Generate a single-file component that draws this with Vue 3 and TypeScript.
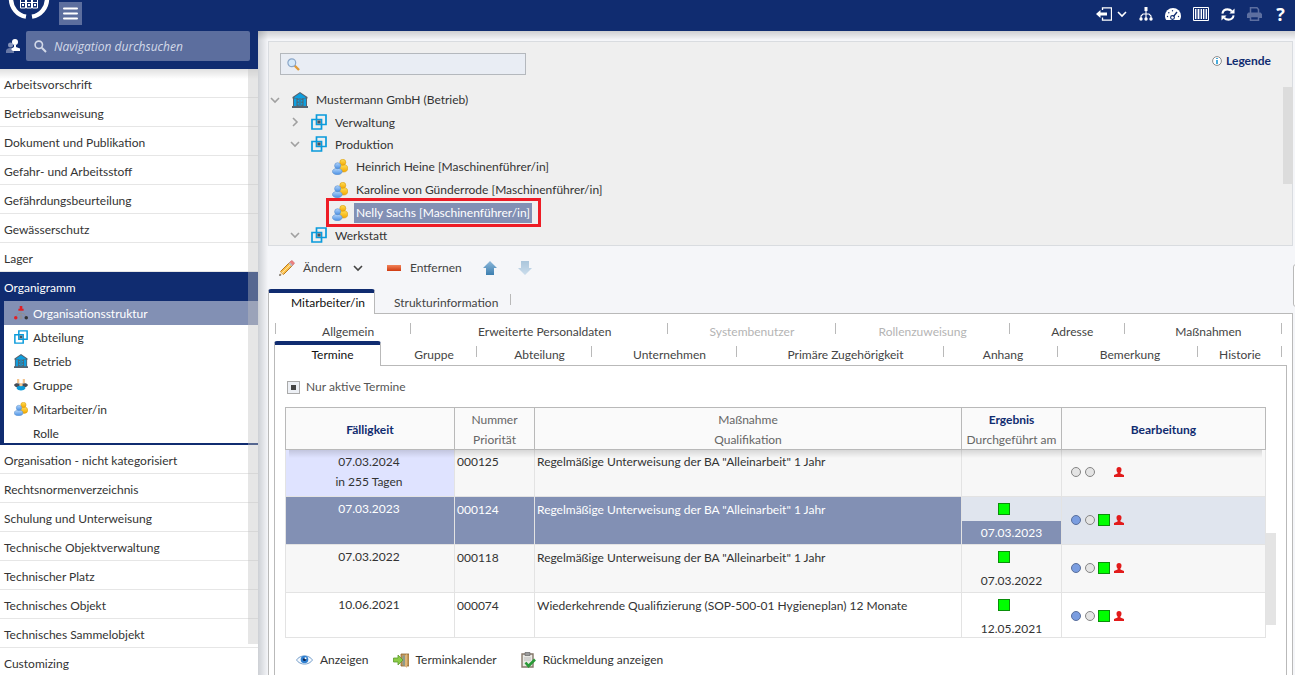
<script setup lang="ts">
import { ref } from 'vue'

interface NavChild { label: string; icon?: string }
interface TreeNode { label: string; icon: string; level: number; state?: 'open' | 'closed' }
interface Tab { label: string; disabled?: boolean; cls?: string }
interface Row {
  due: string
  note?: string
  no: string
  title: string
  done?: string
}

const navTop: string[] = [
  'Arbeitsvorschrift', 'Betriebsanweisung', 'Dokument und Publikation', 'Gefahr- und Arbeitsstoff',
  'Gefährdungsbeurteilung', 'Gewässerschutz', 'Lager',
]
const navBottom: string[] = [
  'Organisation - nicht kategorisiert', 'Rechtsnormenverzeichnis', 'Schulung und Unterweisung',
  'Technische Objektverwaltung', 'Technischer Platz', 'Technisches Objekt',
  'Technisches Sammelobjekt', 'Customizing',
]
const navChildren: NavChild[] = [
  { label: 'Organisationsstruktur', icon: 'i-org' },
  { label: 'Abteilung', icon: 'i-dept' },
  { label: 'Betrieb', icon: 'i-house' },
  { label: 'Gruppe', icon: 'i-group' },
  { label: 'Mitarbeiter/in', icon: 'i-people' },
  { label: 'Rolle' },
]
const activeChild = ref(0)

const tree: TreeNode[] = [
  { label: 'Mustermann GmbH (Betrieb)', icon: 'i-house', level: 0, state: 'open' },
  { label: 'Verwaltung', icon: 'i-dept', level: 1, state: 'closed' },
  { label: 'Produktion', icon: 'i-dept', level: 1, state: 'open' },
  { label: 'Heinrich Heine [Maschinenführer/in]', icon: 'i-people', level: 2 },
  { label: 'Karoline von Günderrode [Maschinenführer/in]', icon: 'i-people', level: 2 },
  { label: 'Nelly Sachs [Maschinenführer/in]', icon: 'i-people', level: 2 },
  { label: 'Werkstatt', icon: 'i-dept', level: 1, state: 'open' },
]
const activeNode = ref(5)

const upperTabs: Tab[] = [
  { label: 'Allgemein', cls: 'shift' },
  { label: 'Erweiterte Personaldaten', cls: 'shift' },
  { label: 'Systembenutzer', disabled: true },
  { label: 'Rollenzuweisung', disabled: true },
  { label: 'Adresse', cls: 'shift' },
  { label: 'Maßnahmen', cls: 'shift' },
]
const lowerTabs: Tab[] = [
  { label: 'Termine', cls: 'shift current' },
  { label: 'Gruppe', cls: 'shift' },
  { label: 'Abteilung', cls: 'shift' },
  { label: 'Unternehmen', cls: 'shift' },
  { label: 'Primäre Zugehörigkeit', cls: 'shift' },
  { label: 'Anhang', cls: 'nudge' },
  { label: 'Bemerkung', cls: 'nudge' },
  { label: 'Historie' },
]

const training = 'Regelmäßige Unterweisung der BA "Alleinarbeit" 1 Jahr'
const rows: Row[] = [
  { due: '07.03.2024', note: 'in 255 Tagen', no: '000125', title: training },
  { due: '07.03.2023', no: '000124', title: training, done: '07.03.2023' },
  { due: '07.03.2022', no: '000118', title: training, done: '07.03.2022' },
  { due: '10.06.2021', no: '000074', title: 'Wiederkehrende Qualifizierung (SOP-500-01 Hygieneplan) 12 Monate', done: '12.05.2021' },
]
const activeRow = ref(1)
const navQuery = ref('')
const treeQuery = ref('')
</script>

<template>
  <div class="app">
    <svg class="sprite" aria-hidden="true">
      <defs>
        <linearGradient id="g-blue" x1="0" y1="0" x2="0" y2="1"><stop offset="0" stop-color="#b4d6fb" /><stop offset="1" stop-color="#4a90e4" /></linearGradient>
        <linearGradient id="g-gold" x1="0" y1="0" x2="0" y2="1"><stop offset="0" stop-color="#ffdf55" /><stop offset="1" stop-color="#f5a800" /></linearGradient>
        <linearGradient id="g-arrow" x1="0" y1="0" x2="0" y2="1"><stop offset="0" stop-color="#8db8da" /><stop offset="1" stop-color="#3d7fb0" /></linearGradient>
        <linearGradient id="g-minus" x1="0" y1="0" x2="0" y2="1"><stop offset="0" stop-color="#f2845a" /><stop offset="1" stop-color="#cf3a10" /></linearGradient>
        <symbol id="i-house" viewBox="0 0 16 16">
          <path d="M8 0l7.500 5v1.500H15V14h1v2H0v-2h1V6.500H.5V5z" fill="#56636f" />
          <path d="M8 1.300L13.500 5v1h-11V5zM2 6.500h2.500V14H2zM5.500 5h2v9h-2zM8.500 5h2v9h-2zM11.500 6.500H14V14h-2.500z" fill="#0d9fe0" />
          <path d="M5.500 6.500h1V8h-1zM9.500 6.500h1V8h-1zM5.500 9.500h1V11h-1zM9.500 9.500h1V11h-1zM5.500 12.500h1V14h-1zM9.500 12.500h1V14h-1z" fill="#5f5750" />
        </symbol>
        <symbol id="i-dept" viewBox="0 0 16 16">
          <path d="M1 5.500h9.500V15H1z" fill="none" stroke="#0a9bdc" stroke-width="1.700" />
          <path d="M5.500 1H15v9.500H5.500z" fill="none" stroke="#0a9bdc" stroke-width="1.700" />
          <path d="M6.400 6.400h3.200v3.200H6.400z" fill="#4a5560" />
        </symbol>
        <symbol id="i-people" viewBox="0 0 16 16">
          <ellipse cx="11.500" cy="9.300" rx="4.200" ry="3.700" fill="url(#g-gold)" stroke="#d99a10" stroke-width=".6" />
          <circle cx="10.800" cy="3.300" r="3" fill="url(#g-gold)" stroke="#d99a10" stroke-width=".6" />
          <ellipse cx="5.300" cy="12.500" rx="4.900" ry="3.200" fill="url(#g-blue)" stroke="#5b8fcc" stroke-width=".6" />
          <circle cx="5.600" cy="6.700" r="3" fill="url(#g-blue)" stroke="#5b8fcc" stroke-width=".6" />
        </symbol>
        <symbol id="i-org" viewBox="0 0 16 16">
          <path d="M8 5v10M2.500 11.500L5 8.500h6l2.500 3" fill="none" stroke="#8d8d96" stroke-width="1.200" />
          <path d="M6.500 11h3v4h-3z" fill="#8d8d96" />
          <path d="M6.500 0h3v3H11v2.500H5V3h1.500z" fill="#e01f26" />
          <circle cx="2" cy="13.500" r="2" fill="#e01f26" /><circle cx="14" cy="13.500" r="2" fill="#333" />
        </symbol>
        <symbol id="i-group" viewBox="0 0 16 16">
          <path d="M3.500 1h2.500v5H3.500zM10 1h2.500v5H10z" fill="#f3c590" />
          <path d="M0 8c1-2.500 4-2.500 7-1.500L6 10.500C3 11 1 10 0 8zM16 8c-1-2.500-4-2.500-7-1.500l1 4c3 .5 5-.5 6-2.500z" fill="#474c55" />
          <circle cx="8" cy="7.500" r="1.800" fill="#f3c590" />
          <path d="M3 12c0-3 2.500-3.500 5-2.500 2.500-1 5-.5 5 2.500-1.500 3-8.500 3-10 0z" fill="#0c9ad8" />
        </symbol>
        <symbol id="i-down" viewBox="0 0 10 10"><path d="M1 3l4 4 4-4" fill="none" stroke="currentColor" stroke-width="1.600" /></symbol>
        <symbol id="i-right" viewBox="0 0 10 10"><path d="M3 1l4 4-4 4" fill="none" stroke="currentColor" stroke-width="1.600" /></symbol>
        <symbol id="i-up-arrow" viewBox="0 0 14 14"><path d="M7 0l7 7h-3v7H3V7H0z" fill="url(#g-arrow)" /></symbol>
        <symbol id="i-person" viewBox="0 0 10 10"><path d="M5 0a2.500 2.500 0 0 1 2.500 2.500C7.500 4 7 5 6.400 5.500v1L10 8v2H0V8l3.600-1.500v-1C3 5 2.500 4 2.500 2.500A2.500 2.500 0 0 1 5 0z" fill="#e21b1b" /></symbol>
      </defs>
    </svg>

    <header class="topbar">
      <svg class="logo" width="42" height="20" viewBox="0 0 42 20" aria-label="Logo" role="img">
        <path d="M3 -1a18 18 0 0 0 15 17.700M24 16.700A18 18 0 0 0 39 -1" fill="none" stroke="#fff" stroke-width="4.400" />
        <g fill="none" stroke="#fff" stroke-width="1">
          <path d="M12.500 -2v10h5v-10M18.500 -2v10h5v-10M24.500 -2v10h5v-10" /><path d="M12.500 2.500h5M18.500 2.500h5M24.500 2.500h5" />
        </g>
        <path d="M14 4h2v2h-2zM20 4h2v2h-2zM26 4h2v2h-2z" fill="#fff" />
      </svg>
      <button class="menu" type="button" aria-label="Menü">
        <svg width="15" height="13" viewBox="0 0 15 13"><path d="M1 1.500h13M1 6.500h13M1 11.500h13" stroke="#fff" stroke-width="2" stroke-linecap="round" /></svg>
      </button>
      <div class="tools">
        <button type="button" class="exit" aria-label="Abmelden">
          <svg width="16" height="16" viewBox="0 0 16 16"><path d="M6.500 4V1.800h9v12.400h-9V11.500" fill="none" stroke="#fff" stroke-width="1.300" /><path d="M0 8l4.500-4v2.500H11v3H4.500V12z" fill="#fff" /></svg>
          <svg width="10" height="10"><use href="#i-down" /></svg>
        </button>
        <button type="button" aria-label="Struktur">
          <svg width="14" height="14" viewBox="0 0 14 14"><path d="M7 2v9M2 11V9l2-2h6l2 2v2" fill="none" stroke="#fff" stroke-width="1.100" /><path d="M5.500 0h3v4h-3z" fill="#fff" /><circle cx="7" cy="12" r="1.700" fill="#fff" /><circle cx="2" cy="12" r="1.700" fill="#fff" /><circle cx="12" cy="12" r="1.700" fill="#fff" /></svg>
        </button>
        <button type="button" aria-label="Cockpit">
          <svg width="16" height="14" viewBox="0 0 16 14"><path d="M8 1a8 8 0 0 1 8 8c0 1.500-.5 3-1.300 4H1.300C.5 12 0 10.500 0 9a8 8 0 0 1 8-8z" fill="#fff" /><path d="M8.500 9.500L12 5" stroke="#102c70" stroke-width="1.300" /><circle cx="7.500" cy="10.500" r="1.900" fill="none" stroke="#102c70" stroke-width="1.100" /><g fill="#102c70"><circle cx="2.500" cy="9.500" r=".7" /><circle cx="3.800" cy="5.800" r=".7" /><circle cx="7.500" cy="3.800" r=".7" /><circle cx="13.500" cy="9.500" r=".7" /></g></svg>
        </button>
        <button type="button" aria-label="Barcode">
          <svg width="16" height="14" viewBox="0 0 16 14"><path d="M.5.500h15v13H.5z" fill="none" stroke="#fff" /><path d="M2.500 2v10M5.500 2v10M8.500 2v10M10.500 2v10M13.500 2v10" stroke="#fff" /><path d="M4 2v10M7 2v10M12 2v10" stroke="#c6cee2" /></svg>
        </button>
        <button type="button" aria-label="Aktualisieren">
          <svg width="14" height="15" viewBox="0 0 15 15"><path d="M1.500 6.500c.5-3 3-4.500 5.500-4.500 2 0 3.500.7 4.700 2M13.500 8.500c-.5 3-3 4.500-5.500 4.500-2 0-3.500-.7-4.700-2" fill="none" stroke="#fff" stroke-width="2.200" /><path d="M14.500 1v5.500H9zM.5 14V8.500H6z" fill="#fff" /></svg>
        </button>
        <button type="button" aria-label="Drucken" disabled>
          <svg width="15" height="14" viewBox="0 0 15 14"><path d="M3.500 6V.8h6.500L11.500 2.500V6" fill="none" stroke="#5d6fa0" stroke-width="1.500" /><path d="M1.500 5.500h12L15 7v4h-3V9H3v2H0V7z" fill="#5d6fa0" /><path d="M3.500 9.500h8v3.700h-8z" fill="none" stroke="#5d6fa0" stroke-width="1.500" /></svg>
        </button>
        <button type="button" class="help" aria-label="Hilfe">?</button>
      </div>
    </header>

    <div class="body">
      <aside class="sidebar">
        <div class="finder">
          <svg width="14" height="14" viewBox="0 0 14 14"><circle cx="4.500" cy="6" r="2.500" fill="#8693b8" /><path d="M0 14v-2c0-2 2-3 4.500-3S8 10 8 12v2z" fill="#6878a6" /><circle cx="9" cy="3" r="3" fill="#fff" /><path d="M5.500 11V9.500L8 8V6h2v2l4 1.500V12H7z" fill="#fff" /></svg>
          <label class="navsearch">
            <svg width="13" height="13" viewBox="0 0 13 13"><circle cx="4.800" cy="4.800" r="3.700" fill="none" stroke="#d3d9e8" stroke-width="1.600" /><path d="M7.800 7.800L12 12" stroke="#d3d9e8" stroke-width="2" /></svg>
            <input v-model="navQuery" type="text" placeholder="Navigation durchsuchen" aria-label="Navigation durchsuchen" />
          </label>
        </div>
        <nav class="nav">
          <a v-for="n in navTop" :key="n" href="#" class="item">{{ n }}</a>
          <div class="open">
            <a href="#" class="item head">Organigramm</a>
            <div class="children">
              <a v-for="(c, i) in navChildren" :key="c.label" href="#" class="child" :class="{ on: i === activeChild }" @click.prevent="activeChild = i">
                <svg width="14" height="14"><use v-if="c.icon" :href="'#' + c.icon" /></svg><span>{{ c.label }}</span>
              </a>
            </div>
          </div>
          <a v-for="n in navBottom" :key="n" href="#" class="item">{{ n }}</a>
          <div class="navscroll"></div>
        </nav>
      </aside>

      <main class="main">
        <section class="treepanel">
          <div class="treehead">
            <label class="treesearch">
              <svg width="13" height="13" viewBox="0 0 13 13"><path d="M7.500 7.500l4.500 4.500" stroke="#e09a35" stroke-width="2.400" /><circle cx="4.800" cy="4.800" r="3.900" fill="#d4e9fa" stroke="#8ba6c8" stroke-width="1.200" /></svg>
              <input v-model="treeQuery" type="text" aria-label="Struktur durchsuchen" />
            </label>
            <a href="#" class="legend">
              <svg width="10" height="10" viewBox="0 0 10 10"><circle cx="5" cy="5" r="4.400" fill="#fff" stroke="#8a8a8a" /><path d="M5 2v1M5 4v4" stroke="#1b98d4" stroke-width="1.600" /></svg>Legende
            </a>
          </div>
          <div class="tree">
            <div v-for="(n, i) in tree" :key="n.label" class="node" :class="['lv' + n.level, { marked: i === activeNode }]">
              <svg v-if="n.state" class="tog" width="10" height="10"><use :href="n.state === 'open' ? '#i-down' : '#i-right'" /></svg>
              <svg class="ico" width="16" height="16"><use :href="'#' + n.icon" /></svg>
              <button type="button" @click="activeNode = i">{{ n.label }}</button>
            </div>
          </div>
          <div class="treescroll"></div>
        </section>

        <div class="actions">
          <button type="button" class="edit">
            <svg width="16" height="16" viewBox="0 0 16 16"><path d="M1.500 11.500L11 2l3 3-9.500 9.500z" fill="#fbc04c" stroke="#b06d12" stroke-width=".9" /><path d="M3 13L12.500 3.500" stroke="#ffe49a" /><path d="M10.500 2.500l1.700-1.700c.8-.8 3.800 2 3 3l-1.700 1.700z" fill="#ee8080" stroke="#c66" stroke-width=".6" /><path d="M9.500 3.500l1.300-1.300 3 3-1.300 1.300z" fill="#b9bec8" /><path d="M.3 15.700l1.200-4.200 3 3z" fill="#f5dcb4" /><path d="M.2 15.800l.6-2 1.400 1.400z" fill="#222" /></svg>
            <span>Ändern</span>
            <svg class="caret" width="10" height="10"><use href="#i-down" /></svg>
          </button>
          <button type="button" class="remove">
            <svg width="14" height="6" viewBox="0 0 14 6"><path d="M0 0h14v6H0z" fill="url(#g-minus)" /></svg><span>Entfernen</span>
          </button>
          <button type="button" class="move" aria-label="Nach oben"><svg width="14" height="14"><use href="#i-up-arrow" /></svg></button>
          <button type="button" class="move down" aria-label="Nach unten" disabled><svg width="14" height="14"><use href="#i-up-arrow" /></svg></button>
        </div>

        <div class="outer-tabs">
          <button type="button" class="current">Mitarbeiter/in</button>
          <button type="button" class="other">Strukturinformation</button>
          <span class="tick"></span>
          <span class="rest"></span>
        </div>
        <div class="outer">
          <div class="row1">
            <button v-for="t in upperTabs" :key="t.label" type="button" :class="t.cls" :disabled="t.disabled">{{ t.label }}</button>
          </div>
          <div class="row2">
            <button v-for="t in lowerTabs" :key="t.label" type="button" :class="t.cls">{{ t.label }}</button>
            <span class="rest"></span>
          </div>
          <div class="inner">
            <label class="check"><input type="checkbox" checked /><span>Nur aktive Termine</span></label>
            <div class="gridwrap">
              <table>
                <colgroup><col class="c1" /><col class="c2" /><col /><col class="c4" /><col class="c5" /></colgroup>
                <thead>
                  <tr>
                    <th class="strong">Fälligkeit</th>
                    <th><span>Nummer</span><span>Priorität</span></th>
                    <th><span>Maßnahme</span><span>Qualifikation</span></th>
                    <th><span class="strong">Ergebnis</span><span>Durchgeführt am</span></th>
                    <th class="strong">Bearbeitung</th>
                  </tr>
                </thead>
                <tbody>
                  <tr v-for="(r, i) in rows" :key="r.no" :class="{ sel: i === activeRow, due: !!r.note }" @click="activeRow = i">
                    <td class="date">{{ r.due }}<span v-if="r.note">{{ r.note }}</span></td>
                    <td>{{ r.no }}</td>
                    <td>{{ r.title }}</td>
                    <td class="result"><div v-if="r.done" class="half"><i class="sq"></i></div><div v-if="r.done" class="half day">{{ r.done }}</div></td>
                    <td class="work">
                      <div>
                        <i class="dot" :class="{ blue: r.done }"></i><i class="dot"></i><i class="sq" :class="{ none: !r.done }"></i>
                        <svg width="10" height="10"><use href="#i-person" /></svg>
                      </div>
                    </td>
                  </tr>
                </tbody>
              </table>
              <div class="headshade"></div>
              <div class="gridscroll"></div>
            </div>
            <div class="foot">
              <button type="button">
                <svg width="17" height="16" viewBox="0 0 17 16"><path d="M.5 8C4 2.500 13 2.500 16.500 8 13 13.500 4 13.500.5 8z" fill="#f4f9ff" stroke="#7ba2cc" /><circle cx="8.500" cy="7.500" r="3.800" fill="#2f7fd0" /><circle cx="8.500" cy="7.500" r="1.600" fill="#0b2350" /><circle cx="9.500" cy="6.300" r="1" fill="#fff" /></svg><span>Anzeigen</span>
              </button>
              <button type="button">
                <svg width="16" height="16" viewBox="0 0 16 16"><path d="M8 2h8v12H8z" fill="#c99a5b" stroke="#8c6430" stroke-width=".8" /><path d="M9.500 3.500H12V14l-2.500-1z" fill="#8e9a8c" /><path d="M12 3.500l2-1.500v14l-2-2z" fill="#e0b679" /><path d="M.5 6H5V3l5 5-5 5v-3H.5z" fill="#8ccc46" stroke="#5c9a2c" stroke-width=".8" /></svg><span>Terminkalender</span>
              </button>
              <button type="button">
                <svg width="15" height="16" viewBox="0 0 15 16"><path d="M1 2h11v13H1z" fill="#e9e9e4" stroke="#857769" stroke-width="1.400" /><path d="M4 .5h5v3H4z" fill="#9b9b9b" stroke="#666" stroke-width=".7" /><path d="M3 6h7M3 8h7" stroke="#bbb" /><path d="M4.500 10.500l3 3.500L14 7.500" fill="none" stroke="#2a9a38" stroke-width="2.600" /></svg><span>Rückmeldung anzeigen</span>
              </button>
            </div>
          </div>
        </div>
        <div class="flap"></div>
      </main>
    </div>
  </div>
</template>

<style>
html, body { margin: 0; overflow: hidden; }
</style>

<style scoped>
.app { --navy: #102c70; --sel: #8290b4; --line: #b9b9b9; height: 100vh; display: flex; flex-direction: column; overflow: hidden; background: #f5f6f9; color: #333; font: 12px/16px Lato, "Open Sans", sans-serif; }
.app *, .app *::before, .app *::after { box-sizing: border-box; }
.sprite { position: absolute; width: 0; height: 0; }
svg { display: block; flex: none; }
button { border: 0; margin: 0; padding: 0; background: none; font: inherit; color: inherit; white-space: nowrap; }
input { font: inherit; }
a { color: inherit; text-decoration: none; }

.topbar { height: 31px; flex: none; display: flex; align-items: flex-start; background: var(--navy); padding: 0 8px; position: relative; z-index: 3; }
.menu { width: 23px; height: 23px; margin: 2px 0 0 9px; background: #5c6e9e; display: grid; place-items: center; }
.tools { margin-left: auto; height: 28px; display: flex; align-items: center; gap: 12px; color: #fff; }
.exit { display: flex; align-items: center; gap: 5px; }
.help { width: 13px; font: bold 18px/20px "Open Sans", sans-serif; }

.body { flex: 1; min-height: 0; display: flex; }
.sidebar { width: 258px; flex: none; display: flex; flex-direction: column; background: #fff; overflow: hidden; position: relative; z-index: 2; }
.finder { height: 38px; flex: none; background: var(--navy); display: flex; align-items: flex-start; padding: 0 8px 0 6px; gap: 6px; }
.finder > svg { margin-top: 8px; }
.navsearch { flex: 1; height: 30px; display: flex; align-items: center; gap: 7px; padding: 0 8px; background: #5c6e9e; border-radius: 2px; }
.navsearch input { flex: 1; min-width: 0; border: 0; padding: 2px 0 0; background: none; outline: 0; color: #fff; font-style: italic; font-size: 12px; font-family: "Open Sans", sans-serif; }
.navsearch input::placeholder { color: #d3d9e8; opacity: 1; }
.nav { flex: 1; position: relative; overflow: hidden; }
.nav::before { content: ""; position: absolute; inset: 0 0 auto; height: 10px; background: linear-gradient(rgba(0,0,0,.12), transparent); }
.item { display: block; height: 29px; padding: 8px 4px 0; line-height: 16px; border-bottom: 1px solid #e6e6e6; white-space: nowrap; }
.head { background: var(--navy); color: #fff; border: 0; }
.children { height: 144px; overflow: hidden; border-left: 4px solid var(--navy); border-bottom: 2px solid var(--navy); }
.child { display: flex; align-items: center; gap: 5px; height: 24px; padding-left: 10px; }
.child span { padding-top: 2px; }
.child.on { background: var(--sel); color: #fff; }
.navscroll { position: absolute; top: 0; right: 0; width: 10px; height: 575px; background: rgba(192,192,192,.4); }

.main { flex: 1; min-width: 0; display: flex; flex-direction: column; padding: 10px 2px 0 10px; position: relative; }
.main::before { content: ""; position: absolute; left: 0; top: 0; bottom: 0; width: 10px; background: linear-gradient(90deg, #cdd0d5, #f5f6f9); }
.main::after { content: ""; position: absolute; inset: 0 0 auto; height: 9px; background: linear-gradient(rgba(0,0,0,.16), transparent); }

.treepanel { height: 205px; flex: none; border: 1px solid #d9dce0; background: #efefef; position: relative; }
.treehead { display: flex; justify-content: space-between; align-items: flex-start; padding: 11px 21px 0 11px; height: 46px; }
.treesearch { width: 246px; height: 22px; display: flex; align-items: center; gap: 6px; padding: 0 6px; border: 1px solid #b4b8bd; background: #e9edf4; }
.treesearch input { flex: 1; min-width: 0; border: 0; padding: 0; background: none; outline: 0; }
.legend { display: flex; align-items: center; gap: 4px; font-weight: bold; color: var(--navy); }
.node { display: flex; align-items: center; height: 23px; position: relative; padding-left: 63px; }
.node .tog { width: 10px; margin-right: 12px; color: #a0a0a0; }
.node .ico { margin-right: 6px; }
.node button { height: 20px; padding: 0 2px; line-height: 20px; }
.node.lv0 { padding-left: 1px; }
.node.lv1 { height: 22px; padding-left: 21px; }
.node.lv1 .tog { margin-right: 11px; }
.node.lv1 button { padding-top: 1px; }
.marked button { background: var(--sel); color: #fff; }
.marked::after { content: ""; position: absolute; left: 57px; top: -3px; width: 215px; height: 29px; border: 3px solid #ee1c25; }
.treescroll { position: absolute; right: -1px; top: 45px; width: 10px; height: 97px; background: #dcdcdc; }

.actions { height: 43px; flex: none; display: flex; align-items: center; padding-left: 11px; color: #444; }
.actions button { display: flex; align-items: center; }
.actions span { padding-top: 1px; }
.edit { gap: 8px; }
.caret { margin-left: 3px; color: #444; }
.remove { margin-left: 24px; gap: 9px; }
.move { margin-left: 21px; }
.move.down { opacity: .4; }
.move.down svg { transform: rotate(180deg); }

.outer-tabs { height: 25px; flex: none; display: flex; color: #444; }
.current { color: #111; background: #fff; border-top: 4px solid var(--navy); border-radius: 3px 3px 0 0; }
.outer-tabs .current { width: 107px; padding: 0 0 2px 13px; border-left: 1px solid var(--line); border-right: 1px solid var(--line); }
.outer-tabs .other { padding: 4px 12px 0 19px; border-bottom: 1px solid var(--line); }
.tick { width: 1px; background: linear-gradient(var(--line), var(--line)) 0 5px / 1px 11px no-repeat; border-bottom: 1px solid var(--line); }
.rest { flex: 1; border-bottom: 1px solid var(--line); }
.outer { flex: 1; min-height: 0; display: flex; flex-direction: column; background: #fff; border: solid var(--line); border-width: 0 1px; padding: 0 5px; }
.row1 { height: 27px; flex: none; margin: 0 5px 0 1px; display: grid; grid-template-columns: 136fr 257fr 167fr 174fr 115fr 157fr; color: #444; background: linear-gradient(var(--line), var(--line)) 0 9px / 1px 11px no-repeat; }
.row1 button { padding-top: 9px; background: linear-gradient(var(--line), var(--line)) 100% 9px / 1px 11px no-repeat; }
.row1 button:disabled { color: #b4b4b4; }
.row1 .shift, .row2 .shift { padding-left: 10px; }
.row2 .nudge { padding-left: 4px; }
.row2 { height: 25px; flex: none; display: grid; grid-template-columns: 107fr 96fr 115fr 145fr 207fr 114fr 140fr 84fr 5fr; color: #444; }
.row2 button { padding-top: 4px; border-bottom: 1px solid var(--line); background: linear-gradient(var(--line), var(--line)) 100% 5px / 1px 11px no-repeat; }
.row2 button.current { padding-top: 0; padding-bottom: 2px; background: #fff; border: solid var(--line); border-width: 4px 1px 0; border-top-color: var(--navy); }
.inner { flex: 1; min-height: 0; overflow: hidden; border: solid var(--line); border-width: 0 1px; padding: 12px 20px 0 10px; }
.check { display: flex; align-items: center; gap: 6px; height: 18px; margin: 0 0 11px 2px; color: #555; }
.check input { appearance: none; width: 13px; height: 13px; margin: 0; border: 1px solid #aaa; background: linear-gradient(#444, #444) center / 5px 5px no-repeat #edf0f5; }
.gridwrap { position: relative; }
table { width: 100%; table-layout: fixed; border-collapse: separate; border-spacing: 0; }
.c1 { width: 170px; } .c2 { width: 80px; } .c4 { width: 100px; } .c5 { width: 204px; }
th { height: 43px; padding: 2px 0 0; border: solid var(--line); border-width: 1px 1px 1px 0; background: #fafafa; font-weight: normal; color: #666; white-space: nowrap; vertical-align: middle; }
th:first-child { border-left-width: 1px; }
th span { display: block; line-height: 19px; }
th span + span { padding-top: 1px; }
.strong { font-weight: bold; color: var(--navy); }
td { height: 48px; padding: 5px 2px 0; line-height: 16px; border: solid #e3e3e3; border-width: 0 1px 1px 0; vertical-align: top; white-space: nowrap; overflow: hidden; background: #fff; }
td:first-child { border-left-width: 1px; }
tr:nth-child(odd) td { background: #f7f7f7; }
tbody tr:first-child td { height: 47px; padding-top: 4px; }
tbody tr:last-child td { height: 44px; }
td.date { text-align: center; padding-top: 4px; padding-right: 4px; }
.date span { display: block; margin-top: 4px; }
tr.due td.date { background: #dfe3ff; }
tr.sel td { background: var(--sel); color: #fff; }
tr.sel td.result, tr.sel td.work { background: #e0e5ee; }
td.result { padding: 0; }
.half { height: 23px; text-align: center; padding-right: 15px; padding-top: 6px; }
.half.day { padding: 4px 0 0; line-height: 16px; margin-top: 1px; height: 20px; }
.sel .day { background: var(--sel); height: 23px; }
.sq { display: block; width: 12px; height: 12px; background: #0f0; border: 1px solid #0a8f0a; }
.half .sq { margin: 0 auto; }
.sq.none { visibility: hidden; }
td.work { padding: 17px 9px 0; }
tbody tr.due td.work { padding-top: 16px; }
.work div { display: flex; align-items: center; height: 12px; }
.dot { width: 10px; height: 10px; margin-right: 4px; border: 1px solid #858585; border-radius: 50%; background: #e4e4e4; }
.dot.blue { background: #7a9de0; border-color: #5a6f9c; }
.work .sq { margin: 0 4px 0 -1px; }
.headshade { position: absolute; left: 4px; right: 4px; top: 43px; height: 8px; background: linear-gradient(rgba(0,0,0,.13), transparent); }
.gridscroll { position: absolute; right: -10px; top: 126px; width: 10px; height: 92px; background: #e4e4e4; }
.foot { display: flex; align-items: center; gap: 24px; height: 44px; padding-left: 11px; }
.foot button { display: flex; align-items: center; gap: 7px; }
.flap { position: absolute; right: -6px; top: 233px; width: 8px; height: 43px; border: 1px solid var(--line); border-radius: 3px; background: #fff; }
</style>
